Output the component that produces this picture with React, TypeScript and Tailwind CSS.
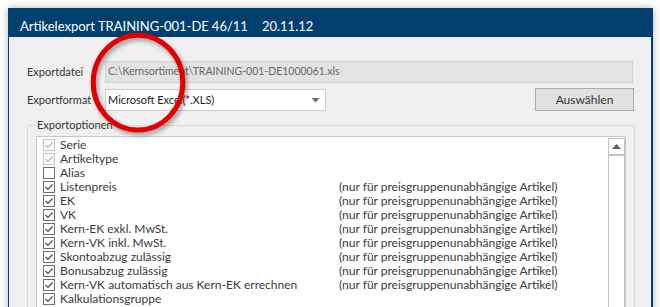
import React from "react";

type Row = { label: string; checked: boolean; disabled?: boolean; note?: boolean };

const rows: Row[] = [
  { label: "Serie", checked: true, disabled: true },
  { label: "Artikeltype", checked: true, disabled: true },
  { label: "Alias", checked: false },
  { label: "Listenpreis", checked: true, note: true },
  { label: "EK", checked: true, note: true },
  { label: "VK", checked: true, note: true },
  { label: "Kern-EK exkl. MwSt.", checked: true, note: true },
  { label: "Kern-VK inkl. MwSt.", checked: true, note: true },
  { label: "Skontoabzug zulässig", checked: true, note: true },
  { label: "Bonusabzug zulässig", checked: true, note: true },
  { label: "Kern-VK automatisch aus Kern-EK errechnen", checked: true, note: true },
  { label: "Kalkulationsgruppe", checked: true },
];

function CheckBox({ checked, disabled }: { checked: boolean; disabled?: boolean }) {
  return (
    <div
      className={`flex h-[12px] w-[12px] shrink-0 items-center justify-center border bg-white ${
        disabled ? "border-[#c4c4c4]" : "border-[#707070]"
      }`}
    >
      {checked && (
        <svg width="10" height="10" viewBox="0 0 10 10">
          <polyline
            points="1.5,5 4,7.5 8.5,2.5"
            fill="none"
            stroke={disabled ? "#b4b4b4" : "#4a4a4a"}
            strokeWidth="1.2"
          />
        </svg>
      )}
    </div>
  );
}

export default function App() {
  return (
    <div className="relative h-[307px] w-[660px] overflow-hidden bg-white font-['Lato','Noto_Sans',sans-serif]">
      <div className="ml-[8px] mt-[8px] h-[330px] w-[645px] border-l border-r-2 border-[#003f6e] bg-[#f0f0f0] shadow-[0_0_8px_rgba(0,0,0,0.3)]">
        {/* titelleiste */}
        <div className="flex h-[29px] items-start bg-[#003f6e] pl-[11px] pt-[11px] text-[13px] leading-[15px] text-white">
          <span>Artikelexport TRAINING-001-DE</span>
          <span className="ml-[3px]">46/11</span>
          <span className="ml-[14px]">20.11.12</span>
        </div>

        <div className="pl-[18px] pt-[24px] text-[11px] text-[#333]">
          {/* Exportdatei */}
          <div className="flex items-center">
            <div className="w-[78px]">Exportdatei</div>
            <div className="flex h-[22px] w-[528px] items-center border border-[#d2d2d2] bg-[#e3e3e3] pl-[2px] text-[10.5px] text-[#666]">
              C:\Kernsortiment\TRAINING-001-DE1000061.xls
            </div>
          </div>

          {/* Exportformat */}
          <div className="mt-[5px] flex items-start">
            <div className="mt-[1px] flex h-[22px] w-[78px] items-center">Exportformat</div>
            <div className="mt-[1px] flex h-[22px] w-[221px] items-center justify-between border border-[#cccccc] bg-white pl-[2px] pr-[6px] text-[#222]">
              <span>Microsoft Excel(*.XLS)</span>
              <svg width="7" height="5" viewBox="0 0 7 5">
                <rect x="0" y="0" width="7" height="1" fill="#6a6a6a" />
                <polygon points="0.5,1 6.5,1 3.5,4.5" fill="#6a6a6a" />
              </svg>
            </div>
            <div className="ml-[209px] flex h-[23px] w-[99px] items-center justify-center border border-[#adadad] bg-[#e1e1e1] text-[12px] text-[#333]">
              Auswählen
            </div>
          </div>

          {/* Exportoptionen */}
          <fieldset className="mt-[6px] w-[608px] rounded-[3px] border border-[#dadada] px-[8px]">
            <legend className="px-[1px] text-[11px] leading-[16px] text-[#333]">Exportoptionen</legend>
            <div className="mt-[3px] flex h-[200px] border border-[#c8c8c8] bg-white">
              <div className="flex-1 pl-[6px] pt-[1px] text-[12px] leading-[14px] text-[#3a3a3a]">
                {rows.map((r) => (
                  <div key={r.label} className="flex h-[14px] items-center">
                    <CheckBox checked={r.checked} disabled={r.disabled} />
                    <span className="ml-[5px] w-[279px] shrink-0">{r.label}</span>
                    {r.note && <span>(nur für preisgruppenunabhängige Artikel)</span>}
                  </div>
                ))}
              </div>
              <div className="mt-[1px] flex w-[17px] flex-col">
                <div className="flex h-[18px] items-center justify-center border-x border-t border-b-2 border-[#c4c4c4] bg-white">
                  <svg width="9" height="5" viewBox="0 0 9 5">
                    <polygon points="4.5,0 9,5 0,5" fill="#606060" />
                  </svg>
                </div>
                <div className="flex-1 border-x border-[#c4c4c4]" />
              </div>
            </div>
          </fieldset>
        </div>
      </div>

      {/* roter kreis */}
      <svg
        className="absolute left-[80px] top-[25px]"
        width="122"
        height="122"
        viewBox="0 0 122 122"
        style={{ filter: "drop-shadow(2px 3px 2px rgba(0,0,0,0.35))" }}
      >
        <ellipse cx="58" cy="57.6" rx="44.8" ry="47.4" fill="none" stroke="#e30000" strokeWidth="5" />
      </svg>
    </div>
  );
}
